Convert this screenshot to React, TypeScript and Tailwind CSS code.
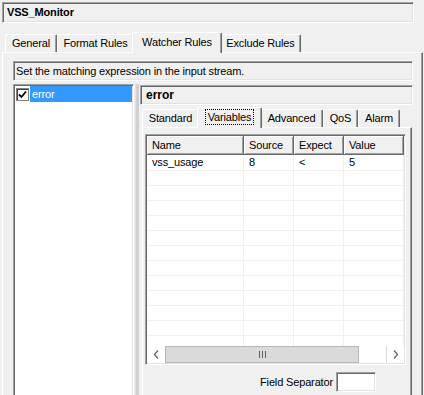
import React from "react";

const sunken =
  "border border-t-[#a0a0a0] border-l-[#a0a0a0] border-b-white border-r-white shadow-[inset_1px_1px_0_#696969,inset_-1px_-1px_0_#e3e3e3]";

const tabBase =
  "flex items-center justify-center border-t border-l border-r border-t-white border-l-white border-r-[#696969] rounded-t-[2px] shadow-[inset_-1px_0_0_#a0a0a0] bg-[#f0f0f0] shrink-0";

function Tab({ label, w, selected, focus }: { label: string; w: number; selected?: boolean; focus?: boolean }) {
  return (
    <div
      className={
        tabBase +
        (selected ? " h-[21px] -mb-px -mx-[2px] relative z-10 pb-[2px]" : " h-[18px]")
      }
      style={{ width: selected ? w + 4 : w }}
    >
      {focus ? (
        <span className="border border-dotted border-black px-[2px] leading-[14px]">{label}</span>
      ) : (
        <span>{label}</span>
      )}
    </div>
  );
}

function ChevronLeft() {
  return (
    <svg width="7" height="9" viewBox="0 0 7 9">
      <path d="M5 0.5 L1.5 4.5 L5 8.5" fill="none" stroke="#606060" strokeWidth="1.2" />
    </svg>
  );
}
function ChevronRight() {
  return (
    <svg width="7" height="9" viewBox="0 0 7 9">
      <path d="M2 0.5 L5.5 4.5 L2 8.5" fill="none" stroke="#606060" strokeWidth="1.2" />
    </svg>
  );
}

export default function App() {
  const rows = Array.from({ length: 12 });
  return (
    <div
      className="relative w-[424px] h-[395px] overflow-hidden bg-[#f0f0f0] text-[11px] tracking-[-0.15px] text-black"
      style={{ fontFamily: '"Liberation Sans", Arial, sans-serif' }}
    >
      {/* title */}
      <div className={"ml-[2px] mt-[2px] w-[412px] h-[21px] flex items-center pl-[4px] font-bold " + sunken}>
        VSS_Monitor
      </div>

      {/* outer tabs */}
      <div className="mt-[9px] h-[20px] flex items-end pl-[5px]">
        <Tab label="General" w={52} />
        <Tab label="Format Rules" w={77} />
        <Tab label="Watcher Rules" w={86} selected />
        <Tab label="Exclude Rules" w={81} />
      </div>

      {/* outer panel */}
      <div className="ml-[2px] w-[421px] h-[400px] border-t border-l border-r border-t-white border-l-white border-r-[#696969] shadow-[inset_-1px_0_0_#a0a0a0] pl-[10px] pt-[8px]">
        <div className={"w-[400px] h-[20px] flex items-center pl-[2px] " + sunken}>
          Set the matching expression in the input stream.
        </div>

        <div className="mt-[3px] flex">
          {/* list */}
          <div className={"w-[121px] h-[320px] bg-white p-[1px] " + sunken}>
            <div className="flex items-center h-[16px] mt-0">
              <div className="ml-[1px] w-[13px] h-[13px] border border-[#808080] bg-white flex items-center justify-center shadow-[inset_1px_1px_0_#404040]">
                <svg width="9" height="9" viewBox="0 0 9 9">
                  <path d="M1 4.5 L3.5 7 L8 1.5" fill="none" stroke="#000" strokeWidth="1.8" />
                </svg>
              </div>
              <div className="ml-[1px] flex-1 h-[16px] bg-[#3399ff] text-white flex items-center pl-[2px]">
                error
              </div>
            </div>
          </div>

          {/* splitter */}
          <div className="w-[6px] flex">
            <div className="w-[1px]" />
            <div className="w-[1px] bg-[#e0e0e0]" />
            <div className="w-[3px] bg-[#d0d0d0]" />
          </div>

          {/* right pane */}
          <div className="w-[273px]">
            <div className={"mt-[1px] w-[273px] h-[20px] flex items-center pl-[5px] font-bold text-[12px] tracking-normal " + sunken}>
              error
            </div>

            <div className="mt-[2px] h-[20px] flex items-end pl-[2px]">
              <Tab label="Standard" w={57} />
              <Tab label="Variables" w={61} selected focus />
              <Tab label="Advanced" w={63} />
              <Tab label="QoS" w={35} />
              <Tab label="Alarm" w={42} />
            </div>

            <div className="ml-[2px] w-[270px] h-[300px] border-t border-l border-r border-t-white border-l-white border-r-[#696969] shadow-[inset_-1px_0_0_#a0a0a0] pl-[2px] pt-[6px]">
              {/* grid */}
              <div className={"w-[261px] h-[231px] bg-white p-[1px] flex flex-col " + sunken}>
                <div className="flex h-[19px] shrink-0 bg-[#f0f0f0]">
                  {[
                    ["Name", 97],
                    ["Source", 50],
                    ["Expect", 50],
                    ["Value", 60],
                  ].map(([l, w]) => (
                    <div
                      key={l as string}
                      className="h-[19px] flex items-center pl-[5px] border-r border-b border-r-[#696969] border-b-[#696969] shadow-[inset_1px_1px_0_#ffffff,inset_-1px_-1px_0_#a0a0a0]"
                      style={{ width: w as number }}
                    >
                      {l}
                    </div>
                  ))}
                </div>
                <div className="flex-1 overflow-hidden">
                  <div className="flex h-[16px] border-b border-[#f0f0f0]">
                    <div className="w-[97px] pl-[5px] border-r border-[#f0f0f0] flex items-center">vss_usage</div>
                    <div className="w-[50px] pl-[5px] border-r border-[#f0f0f0] flex items-center">8</div>
                    <div className="w-[50px] pl-[5px] border-r border-[#f0f0f0] flex items-center">&lt;</div>
                    <div className="w-[60px] pl-[5px] border-r border-[#f0f0f0] flex items-center">5</div>
                  </div>
                  {rows.map((_, i) => (
                    <div key={i} className="flex h-[15px] border-b border-[#f0f0f0]">
                      <div className="w-[97px] border-r border-[#f0f0f0]" />
                      <div className="w-[50px] border-r border-[#f0f0f0]" />
                      <div className="w-[50px] border-r border-[#f0f0f0]" />
                      <div className="w-[60px] border-r border-[#f0f0f0]" />
                    </div>
                  ))}
                </div>
                {/* scrollbar */}
                <div className="flex h-[17px] shrink-0 bg-[#f0f0f0]">
                  <div className="w-[18px] bg-white flex items-center justify-center">
                    <ChevronLeft />
                  </div>
                  <div className="w-[194px] bg-[#dadada] border border-[#b8b8b8] flex items-center justify-center gap-[2px]">
                    <div className="w-[1px] h-[7px] bg-[#606060]" />
                    <div className="w-[1px] h-[7px] bg-[#606060]" />
                    <div className="w-[1px] h-[7px] bg-[#606060]" />
                  </div>
                  <div className="w-[27px] bg-white" />
                  <div className="w-[18px] bg-white border-l border-[#dcdcdc] flex items-center justify-center">
                    <ChevronRight />
                  </div>
                </div>
              </div>

              <div className="mt-[7px] flex items-center justify-end pr-[35px]">
                <span className="mr-[3px]">Field Separator</span>
                <div className={"w-[40px] h-[20px] bg-white " + sunken} />
              </div>
            </div>
          </div>
        </div>
      </div>
    </div>
  );
}
